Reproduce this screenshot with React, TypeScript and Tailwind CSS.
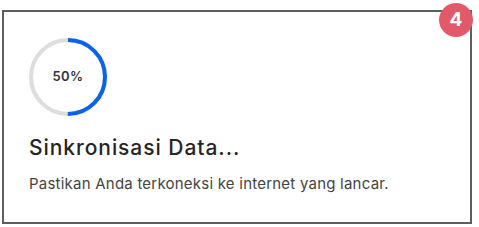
const pct = 50
const r = 37
const c = 2 * Math.PI * r

export default function App() {
  return (
    <div className="w-[479px] h-[227px] bg-white pt-[10px] pl-[2px] font-['Inter',sans-serif]">
      <div className="relative w-[470px] h-[214px] border-2 border-[#5e5e5e] bg-white pl-[25px] pt-[26px]">
        {/* Progress ring */}
        <div className="relative w-[78px] h-[78px]">
          <svg width="78" height="78" viewBox="0 0 78 78" className="-rotate-90">
            <circle cx="39" cy="39" r={r} fill="none" stroke="#dddddd" strokeWidth="4" />
            <circle
              cx="39"
              cy="39"
              r={r}
              fill="none"
              stroke="#0b63ec"
              strokeWidth="4"
              strokeDasharray={c}
              strokeDashoffset={c * (1 - pct / 100)}
            />
          </svg>
          <span className="absolute inset-0 flex items-center justify-center text-[13px] font-semibold tracking-[0.03em] text-[#333]">
            {pct}%
          </span>
        </div>

        <h2 className="mt-[18px] text-[21px] leading-[28px] font-medium tracking-[0.045em] text-[#252525]">
          Sinkronisasi Data...
        </h2>
        <p className="mt-[12px] text-[15px] leading-[20px] tracking-[0.015em] text-[#444]">
          Pastikan Anda terkoneksi ke internet yang lancar.
        </p>

        {/* Step badge */}
        <div className="absolute -top-[9px] -right-[3px] w-[34px] h-[34px] rounded-full bg-[#e25a69] flex items-center justify-center text-white text-[19px] font-bold">
          4
        </div>
      </div>
    </div>
  )
}
